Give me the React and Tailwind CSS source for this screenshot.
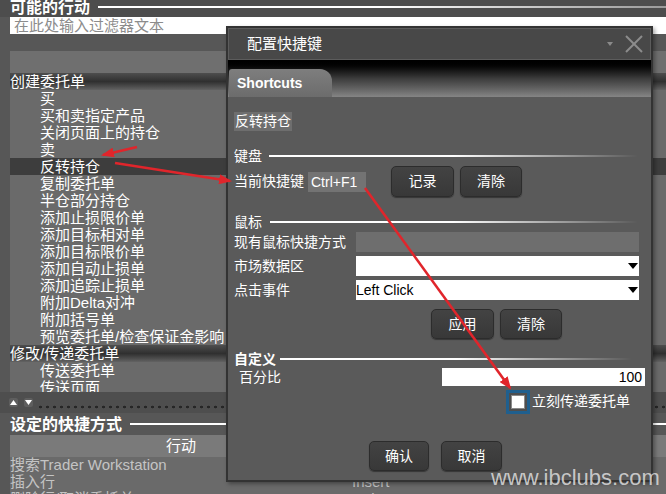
import React from "react";

const actions = [
  "买",
  "买和卖指定产品",
  "关闭页面上的持仓",
  "卖",
  "反转持仓",
  "复制委托单",
  "半仓部分持仓",
  "添加止损限价单",
  "添加目标相对单",
  "添加目标限价单",
  "添加自动止损单",
  "添加追踪止损单",
  "附加Delta对冲",
  "附加括号单",
  "预览委托单/检查保证金影响",
];

const shortcuts = [
  { action: "搜索Trader Workstation", key: "" },
  { action: "插入行", key: "Insert" },
  { action: "删除行/取消委托单", key: "Delete" },
];

function GroupHeader({ label }) {
  return (
    <div className="h-[17px] leading-[17px] bg-linear-to-b from-[#4e4e4e] via-[#303030] to-[#626262] text-white">
      {label}
    </div>
  );
}

function Btn({ label, className }) {
  return (
    <button
      type="button"
      className={
        "rounded-[5px] border border-[#2c2c2c] bg-linear-to-b from-[#434343] to-[#383838] text-white text-[14px] shadow-[0_1px_1px_rgba(0,0,0,0.4)] " +
        className
      }
    >
      {label}
    </button>
  );
}

function Section({ label, bold, lineClass, className }) {
  return (
    <div className={"flex items-center " + className}>
      <span className={bold ? "font-bold" : ""}>{label}</span>
      <div className={"h-[2px] bg-linear-to-r from-white via-white to-transparent " + lineClass} />
    </div>
  );
}

function Caret() {
  return (
    <svg width="10" height="6" viewBox="0 0 10 6" className="mr-[1px]">
      <polygon points="0,0 10,0 5,6" fill="#000" />
    </svg>
  );
}

export default function App() {
  return (
    <div className="relative w-[666px] h-[494px] overflow-hidden bg-[#575757] text-white text-[15px] font-['Liberation_Sans','Noto_Sans_CJK_SC',sans-serif]">
      {/* background: action list */}
      <div className="flex flex-col">
        <div className="h-[17px] flex items-start pl-[10px] bg-[#4d4d4d]">
          <span className="font-bold text-[16px] leading-[16px]">可能的行动</span>
          <div className="mt-[6px] ml-[8px] flex-1 h-[2px] bg-linear-to-r from-white via-white to-[#9a9a9a]" />
        </div>
        <div className="h-[17px] ml-[10px] bg-white text-[#8c8c8c] leading-[17px] pl-[4px]">
          在此处输入过滤器文本
        </div>
        <div className="h-[17px]" />
        <div className="h-[22px] ml-[10px] bg-[#6f6f6f]" />

        <div className="ml-[10px] h-[319px] overflow-hidden bg-[#6a6a6a] flex flex-col">
          <GroupHeader label="创建委托单" />
          {actions.map((a) => (
            <div
              key={a}
              className={
                "h-[17px] shrink-0 leading-[17px] pl-[30px] " +
                (a === "反转持仓" ? "bg-[#3d3d3d]" : "")
              }
            >
              {a}
            </div>
          ))}
          <GroupHeader label="修改/传递委托单" />
          <div className="h-[17px] shrink-0 leading-[17px] pl-[30px]">传送委托单</div>
          <div className="h-[17px] shrink-0 leading-[17px] pl-[30px]">传送页面</div>
        </div>

        <div className="h-[21px] flex items-center bg-[#4e4e4e] pl-[9px]">
          <div className="w-[9px] h-[9px] rounded-[2px] bg-[#5e5e5e] flex items-center justify-center">
            <svg width="7" height="5" viewBox="0 0 7 5">
              <polygon points="0,5 7,5 3.5,0" fill="#fff" />
            </svg>
          </div>
          <div className="ml-[6px] w-[9px] h-[9px] rounded-[2px] bg-[#5e5e5e] flex items-center justify-center">
            <svg width="7" height="5" viewBox="0 0 7 5">
              <polygon points="0,0 7,0 3.5,5" fill="#fff" />
            </svg>
          </div>
          <div className="ml-[4px] mt-[8px] flex-1 h-[4px] bg-[radial-gradient(circle,#262626_1.2px,transparent_1.6px)] bg-size-[7px_4px]" />
        </div>

        <div className="h-[22px] flex items-center pl-[10px]">
          <span className="font-bold text-[16px] leading-[17px]">设定的快捷方式</span>
          <div className="ml-[8px] flex-1 h-[2px] bg-white" />
        </div>
        <div className="h-[22px] ml-[10px] bg-[#7a7a7a] flex">
          <div className="w-[342px] flex items-center justify-center">行动</div>
          <div className="flex-1" />
        </div>
        <div className="ml-[10px] flex-1 bg-[#6a6a6a] text-[#c4c4c4]">
          {shortcuts.map((s) => (
            <div key={s.action} className="h-[17px] leading-[16px] flex">
              <div className="w-[342px]">{s.action}</div>
              <div>{s.key}</div>
            </div>
          ))}
        </div>
      </div>

      {/* dialog window */}
      <div className="absolute left-[226px] top-[26px] w-[427px] h-[456px] border-2 border-[#333333] bg-[#5a5a5a] flex flex-col text-[14px] shadow-[2px_2px_4px_rgba(0,0,0,0.35)]">
        <div className="h-[32px] shrink-0 flex items-center bg-[#484848] border border-[#5c5c5c] pl-[18px] pr-[7px]">
          <span className="text-[15px]">配置快捷键</span>
          <svg width="6" height="4" viewBox="0 0 6 4" className="ml-auto mr-[12px]">
            <polygon points="0,0 6,0 3,4" fill="#8a8a8a" />
          </svg>
          <svg width="18" height="18" viewBox="0 0 18 18">
            <line x1="1" y1="1" x2="17" y2="17" stroke="#8c8c8c" strokeWidth="2" />
            <line x1="17" y1="1" x2="1" y2="17" stroke="#8c8c8c" strokeWidth="2" />
          </svg>
        </div>
        <div className="h-[37px] shrink-0 flex items-end bg-linear-to-b from-[#000000] via-[#3c3c3c] to-[#858585]">
          <div className="ml-[1px] w-[103px] h-[28px] rounded-tr-[12px] rounded-tl-[3px] bg-linear-to-b from-[#7e7e7e] to-[#6c6c6c] flex items-center pl-[8px] pt-[1px] font-bold text-[14px] font-['Liberation_Sans',sans-serif]">
            Shortcuts
          </div>
        </div>

        <div className="flex flex-col px-[6px]">
          <div className="mt-[15px] self-start h-[19px] leading-[19px] px-[1px] bg-[#6e6e6e]">反转持仓</div>

          <Section label="键盘" className="mt-[17px] h-[16px]" lineClass="ml-[7px] mr-[7px] flex-1" />
          <div className="mt-[2px] h-[31px] flex items-center">
            <span className="w-[74px]">当前快捷键</span>
            <div className="w-[58px] h-[20px] leading-[20px] pl-[3px] bg-[#737373] font-['Liberation_Sans',sans-serif]">Ctrl+F1</div>
            <Btn label="记录" className="ml-[25px] w-[63px] h-[31px]" />
            <Btn label="清除" className="ml-[6px] w-[62px] h-[31px]" />
          </div>

          <Section label="鼠标" className="mt-[18px] h-[14px]" lineClass="ml-[8px] mr-[7px] flex-1" />
          <div className="mt-[3px] flex flex-col gap-[4px]">
            <div className="h-[20px] flex items-center">
              <span className="w-[122px]">现有鼠标快捷方式</span>
              <div className="w-[283px] h-[20px] bg-[#6e6e6e]" />
            </div>
            <div className="h-[20px] flex items-center">
              <span className="w-[122px]">市场数据区</span>
              <div className="w-[283px] h-[20px] bg-white flex items-center justify-end">
                <Caret />
              </div>
            </div>
            <div className="h-[20px] flex items-center">
              <span className="w-[122px]">点击事件</span>
              <div className="w-[283px] h-[20px] bg-white flex items-center text-black font-['Liberation_Sans',sans-serif]">
                <span>Left Click</span>
                <span className="ml-auto flex">
                  <Caret />
                </span>
              </div>
            </div>
          </div>
          <div className="mt-[9px] flex">
            <Btn label="应用" className="ml-[197px] w-[63px] h-[30px]" />
            <Btn label="清除" className="ml-[6px] w-[62px] h-[30px]" />
          </div>

          <Section label="自定义" bold className="mt-[12px] h-[16px]" lineClass="ml-[4px] mr-[13px] flex-1" />
          <div className="mt-[1px] h-[18px] flex items-center">
            <span className="pl-[5px]">百分比</span>
            <div className="ml-auto w-[203px] h-[18px] bg-white text-black text-right pr-[3px] leading-[18px] font-['Liberation_Sans',sans-serif]">
              100
            </div>
          </div>
          <div className="mt-[3px] h-[25px] flex items-center">
            <div className="ml-[272px] w-[24px] h-[24px] border-[3px] border-[#1f5f8e] bg-[#4e4e4e] flex items-center justify-center">
              <div className="w-[14px] h-[14px] bg-white border border-[#8a8a8a]" />
            </div>
            <span className="ml-[2px]">立刻传递委托单</span>
          </div>
          <div className="mt-[27px] flex">
            <Btn label="确认" className="ml-[135px] w-[60px] h-[30px]" />
            <Btn label="取消" className="ml-[12px] w-[61px] h-[30px]" />
          </div>
        </div>
      </div>

      {/* annotation arrows */}
      <svg className="absolute inset-0 pointer-events-none" width="666" height="494" viewBox="0 0 666 494">
        <defs>
          <marker id="ah" markerWidth="13" markerHeight="10" refX="11" refY="5" orient="auto" markerUnits="userSpaceOnUse">
            <polygon points="0,0 13,5 0,10" fill="#e0252b" />
          </marker>
        </defs>
        <line x1="137" y1="147" x2="103" y2="155" stroke="#e0252b" strokeWidth="2.5" markerEnd="url(#ah)" />
        <line x1="115" y1="163" x2="230" y2="181" stroke="#e0252b" strokeWidth="2.5" markerEnd="url(#ah)" />
        <line x1="365" y1="188" x2="510" y2="388" stroke="#e0252b" strokeWidth="2.5" markerEnd="url(#ah)" />
      </svg>

      {/* watermark */}
      <div className="absolute left-[491px] top-[465px] text-[22px] leading-[26px] text-[#d6d6d6]/90 font-['Liberation_Sans',sans-serif] pointer-events-none">
        www.ibclubs.com
      </div>
    </div>
  );
}
